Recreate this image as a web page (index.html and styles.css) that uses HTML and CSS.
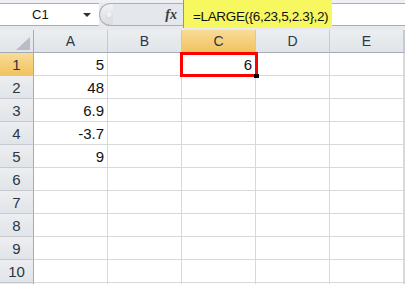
FILE: index.html
```html
<!DOCTYPE html>
<html lang="en">
<head>
  <meta charset="UTF-8">
  <meta name="viewport" content="width=device-width, initial-scale=1.0">
  <title>LARGE function</title>
  <link rel="stylesheet" href="styles.css">
</head>
<body>

  <!-- Formula bar -->
  <div class="toolbar">
    <div class="namebox">
      <span class="cell-ref">C1</span>
      <span class="dropdown"></span>
    </div>
    <div class="splitter"><span class="dot"></span></div>
    <div class="fx-area"><span class="fx">fx</span></div>
    <div class="formula">=LARGE({6,23,5,2.3},2)</div>
    <div class="formula-rest"></div>
  </div>

  <!-- Sheet -->
  <div class="sheet">
    <div class="corner"><span class="tri"></span></div>
    <div class="col-head">A</div>
    <div class="col-head">B</div>
    <div class="col-head active">C</div>
    <div class="col-head">D</div>
    <div class="col-head">E</div>
    <div class="col-head"></div>

    <div class="row-head active">1</div>
    <div class="cell num">5</div><div class="cell"></div><div class="cell num selected">6</div><div class="cell"></div><div class="cell"></div><div class="cell"></div>

    <div class="row-head">2</div>
    <div class="cell num">48</div><div class="cell"></div><div class="cell"></div><div class="cell"></div><div class="cell"></div><div class="cell"></div>

    <div class="row-head">3</div>
    <div class="cell num">6.9</div><div class="cell"></div><div class="cell"></div><div class="cell"></div><div class="cell"></div><div class="cell"></div>

    <div class="row-head">4</div>
    <div class="cell num">-3.7</div><div class="cell"></div><div class="cell"></div><div class="cell"></div><div class="cell"></div><div class="cell"></div>

    <div class="row-head">5</div>
    <div class="cell num">9</div><div class="cell"></div><div class="cell"></div><div class="cell"></div><div class="cell"></div><div class="cell"></div>

    <div class="row-head">6</div>
    <div class="cell"></div><div class="cell"></div><div class="cell"></div><div class="cell"></div><div class="cell"></div><div class="cell"></div>

    <div class="row-head">7</div>
    <div class="cell"></div><div class="cell"></div><div class="cell"></div><div class="cell"></div><div class="cell"></div><div class="cell"></div>

    <div class="row-head">8</div>
    <div class="cell"></div><div class="cell"></div><div class="cell"></div><div class="cell"></div><div class="cell"></div><div class="cell"></div>

    <div class="row-head">9</div>
    <div class="cell"></div><div class="cell"></div><div class="cell"></div><div class="cell"></div><div class="cell"></div><div class="cell"></div>

    <div class="row-head">10</div>
    <div class="cell"></div><div class="cell"></div><div class="cell"></div><div class="cell"></div><div class="cell"></div><div class="cell"></div>

    <div class="row-head last"></div>
    <div class="cell last"></div><div class="cell last"></div><div class="cell last"></div><div class="cell last"></div><div class="cell last"></div><div class="cell last"></div>
  </div>

</body>
</html>
```

FILE: styles.css
```css
* {
  box-sizing: border-box;
}

body {
  margin: 0;
  width: 405px;
  height: 284px;
  overflow: hidden;
  background-color: #fff;
  font-family: "Liberation Sans", Arial, sans-serif;
}

/* ---------- formula bar ---------- */

.toolbar {
  display: flex;
  align-items: flex-start;
  height: 30px;
  background-color: #e6e9ed;
  border-top: 3px solid #eef0f3;
}

.namebox {
  display: flex;
  align-items: center;
  width: 99px;
  height: 23px;
  padding-left: 32px;
  background-color: #fff;
  border-top: 1px solid #a9afb7;
  border-bottom: 1px solid #a9afb7;
  font-size: 13px;
  color: #111;
}

.cell-ref {
  flex: 1;
}

.dropdown {
  width: 0;
  height: 0;
  margin-right: 8px;
  border-left: 4px solid transparent;
  border-right: 4px solid transparent;
  border-top: 4px solid #333;
}

.splitter {
  display: flex;
  align-items: center;
  width: 14px;
  height: 23px;
  padding-left: 5px;
  border-radius: 12px 0 0 12px;
  border: 1px solid #a9afb7;
  border-right: none;
  background: linear-gradient(#f1f2f4, #d9dce1);
}

.dot {
  width: 8px;
  height: 8px;
  border-radius: 50%;
  background: radial-gradient(circle at 50% 40%, #fafafa, #c9cdd2);
}

.fx-area {
  display: flex;
  justify-content: flex-end;
  align-items: center;
  width: 70px;
  height: 23px;
  padding-right: 6px;
  border-top: 1px solid #a9afb7;
  border-bottom: 1px solid #a9afb7;
  background-color: #e4e7ec;
}

.fx {
  font-family: "Liberation Serif", "Times New Roman", serif;
  font-style: italic;
  font-weight: bold;
  font-size: 14px;
  color: #3b3b3b;
}

.formula {
  width: 149px;
  height: 28px;
  margin-top: -3px;
  padding: 9px 0 0 9px;
  background-color: #f7f760;
  border-left: 1px solid #9e9e3c;
  font-size: 13.5px;
  letter-spacing: -0.35px;
  color: #111;
}

.formula-rest {
  flex: 1;
  height: 23px;
  background-color: #fff;
  border-top: 1px solid #a9afb7;
  border-bottom: 1px solid #a9afb7;
}

/* ---------- grid ---------- */

.sheet {
  display: grid;
  grid-template-columns: 34px repeat(5, 74px) 1px;
  grid-template-rows: repeat(11, 23px) 1px;
  width: 405px;
  height: 254px;
  overflow: hidden;
}

.corner,
.col-head,
.row-head {
  background: linear-gradient(#eceef1, #e1e4e8);
  color: #2b3646;
}

.corner {
  position: relative;
  border-right: 1px solid #a4abb4;
  border-bottom: 1px solid #a4abb4;
}

.tri {
  position: absolute;
  right: 3px;
  bottom: 2px;
  width: 0;
  height: 0;
  border-left: 14px solid transparent;
  border-bottom: 13px solid #b9bec5;
}

.col-head {
  display: flex;
  align-items: center;
  justify-content: center;
  font-size: 14px;
  border-right: 1px solid #c6cad0;
  border-bottom: 1px solid #a4abb4;
}

.row-head {
  display: flex;
  align-items: center;
  justify-content: center;
  font-size: 15px;
  padding-top: 1px;
  border-right: 1px solid #a4abb4;
  border-bottom: 1px solid #c6cad0;
}

.col-head.active,
.row-head.active {
  background: linear-gradient(#f9dc97, #f1c35f);
}

.cell {
  border-right: 1px solid #d9d9d9;
  border-bottom: 1px solid #d9d9d9;
  font-size: 15px;
  color: #111;
}

.last {
  border-bottom: none;
}

.num {
  display: flex;
  align-items: center;
  justify-content: flex-end;
  padding-right: 3px;
  padding-top: 1px;
}

.selected {
  position: relative;
}

.selected::after {
  content: "";
  position: absolute;
  top: -1px;
  left: -2px;
  right: -3px;
  bottom: -2px;
  border: 3px solid #f00;
}

.selected::before {
  content: "";
  position: absolute;
  right: -4px;
  bottom: -3px;
  width: 5px;
  height: 4px;
  background-color: #000;
  z-index: 1;
}
```
